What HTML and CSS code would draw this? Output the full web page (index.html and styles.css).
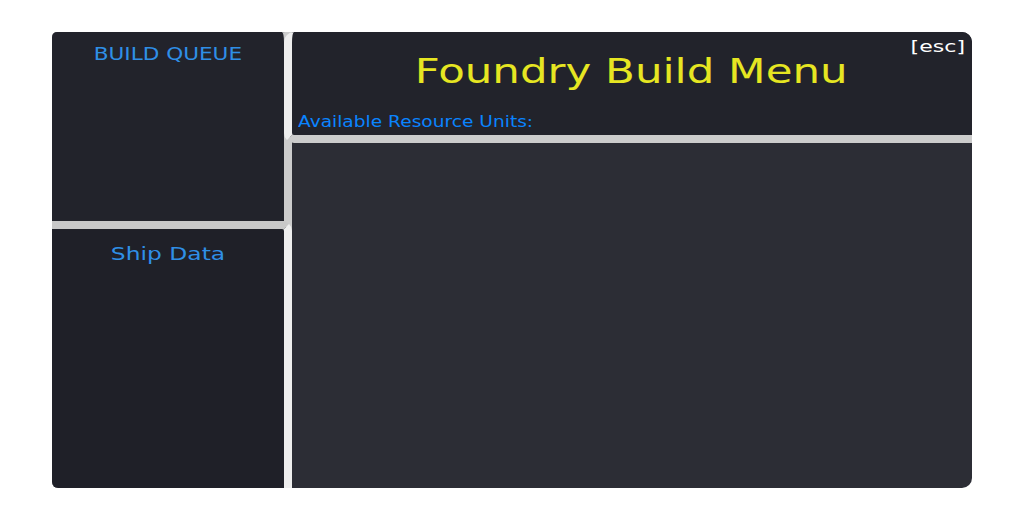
FILE: index.html
```html
<!DOCTYPE html>
<html lang="en">
<head>
  <meta charset="UTF-8">
  <meta name="viewport" content="width=device-width, initial-scale=1.0">
  <title>Foundry Build Menu</title>
  <link rel="stylesheet" href="styles.css">
</head>
<body>
  <div class="menu">
    <div class="side">
      <div class="queue">
        <h2 class="side-title"><span class="wide">BUILD QUEUE</span></h2>
      </div>
      <div class="ship">
        <h2 class="side-title"><span class="wide">Ship Data</span></h2>
      </div>
    </div>
    <div class="content">
      <div class="header">
        <div class="esc"><span class="wide">[esc]</span></div>
        <h1 class="title"><span class="wide">Foundry Build Menu</span></h1>
        <p class="resources"><span class="wide">Available Resource Units:</span></p>
      </div>
      <div class="grid"></div>
    </div>
  </div>
</body>
</html>
```

FILE: styles.css
```css
body {
  margin: 0;
  padding-top: 32px;
  background: #fff;
  font-family: "DejaVu Sans", sans-serif;
  display: flex;
  justify-content: center;
}
.menu {
  width: 920px;
  height: 456px;
  display: flex;
  background: #2c2d35;
  border-radius: 5px 10px 10px 6px;
  overflow: hidden;
}
.wide {
  display: inline-block;
  white-space: nowrap;
}
.side {
  width: 240px;
  display: flex;
  flex-direction: column;
  background: #ccc;
}
.queue {
  height: 189px;
  width: 232px;
  background: #22232b;
  border-right: 8px solid #ccc;
  border-top-right-radius: 10px;
}
.queue .side-title {
  padding-top: 11px;
}
.queue .wide {
  transform: scaleX(1.2);
}
.ship {
  flex: 1;
  width: 232px;
  background: #1f2028;
  border-top: 8px solid #c8c8c8;
  border-right: 8px solid #eee;
  border-top-right-radius: 10px;
}
.ship .side-title {
  padding-top: 14px;
}
.ship .wide {
  transform: scaleX(1.3);
}
.side-title {
  margin: 0;
  font-size: 18px;
  font-weight: normal;
  line-height: 22px;
  text-align: center;
  color: #2f8fe6;
}
.content {
  flex: 1;
  display: flex;
  flex-direction: column;
}
.header {
  height: 103px;
  margin-left: -8px;
  background: #22232b;
  border-left: 8px solid #eee;
  border-bottom: 8px solid #ccc;
  border-radius: 10px 0 0 10px;
  padding: 0 7px 0 6px;
}
.esc {
  padding-top: 6px;
  height: 18px;
  line-height: 18px;
  text-align: right;
  font-size: 15px;
  color: #fff;
}
.esc .wide {
  transform: scaleX(1.47);
  transform-origin: right center;
}
.title {
  margin: 0;
  height: 30px;
  line-height: 30px;
  font-size: 34px;
  font-weight: normal;
  text-align: center;
  color: #e6e622;
}
.title .wide {
  transform: scaleX(1.28);
}
.resources {
  margin: 0;
  padding-top: 27px;
  font-size: 15px;
  line-height: 18px;
  color: #0a84ff;
}
.resources .wide {
  transform: scaleX(1.24);
  transform-origin: left center;
}
.grid {
  flex: 1;
}
```
